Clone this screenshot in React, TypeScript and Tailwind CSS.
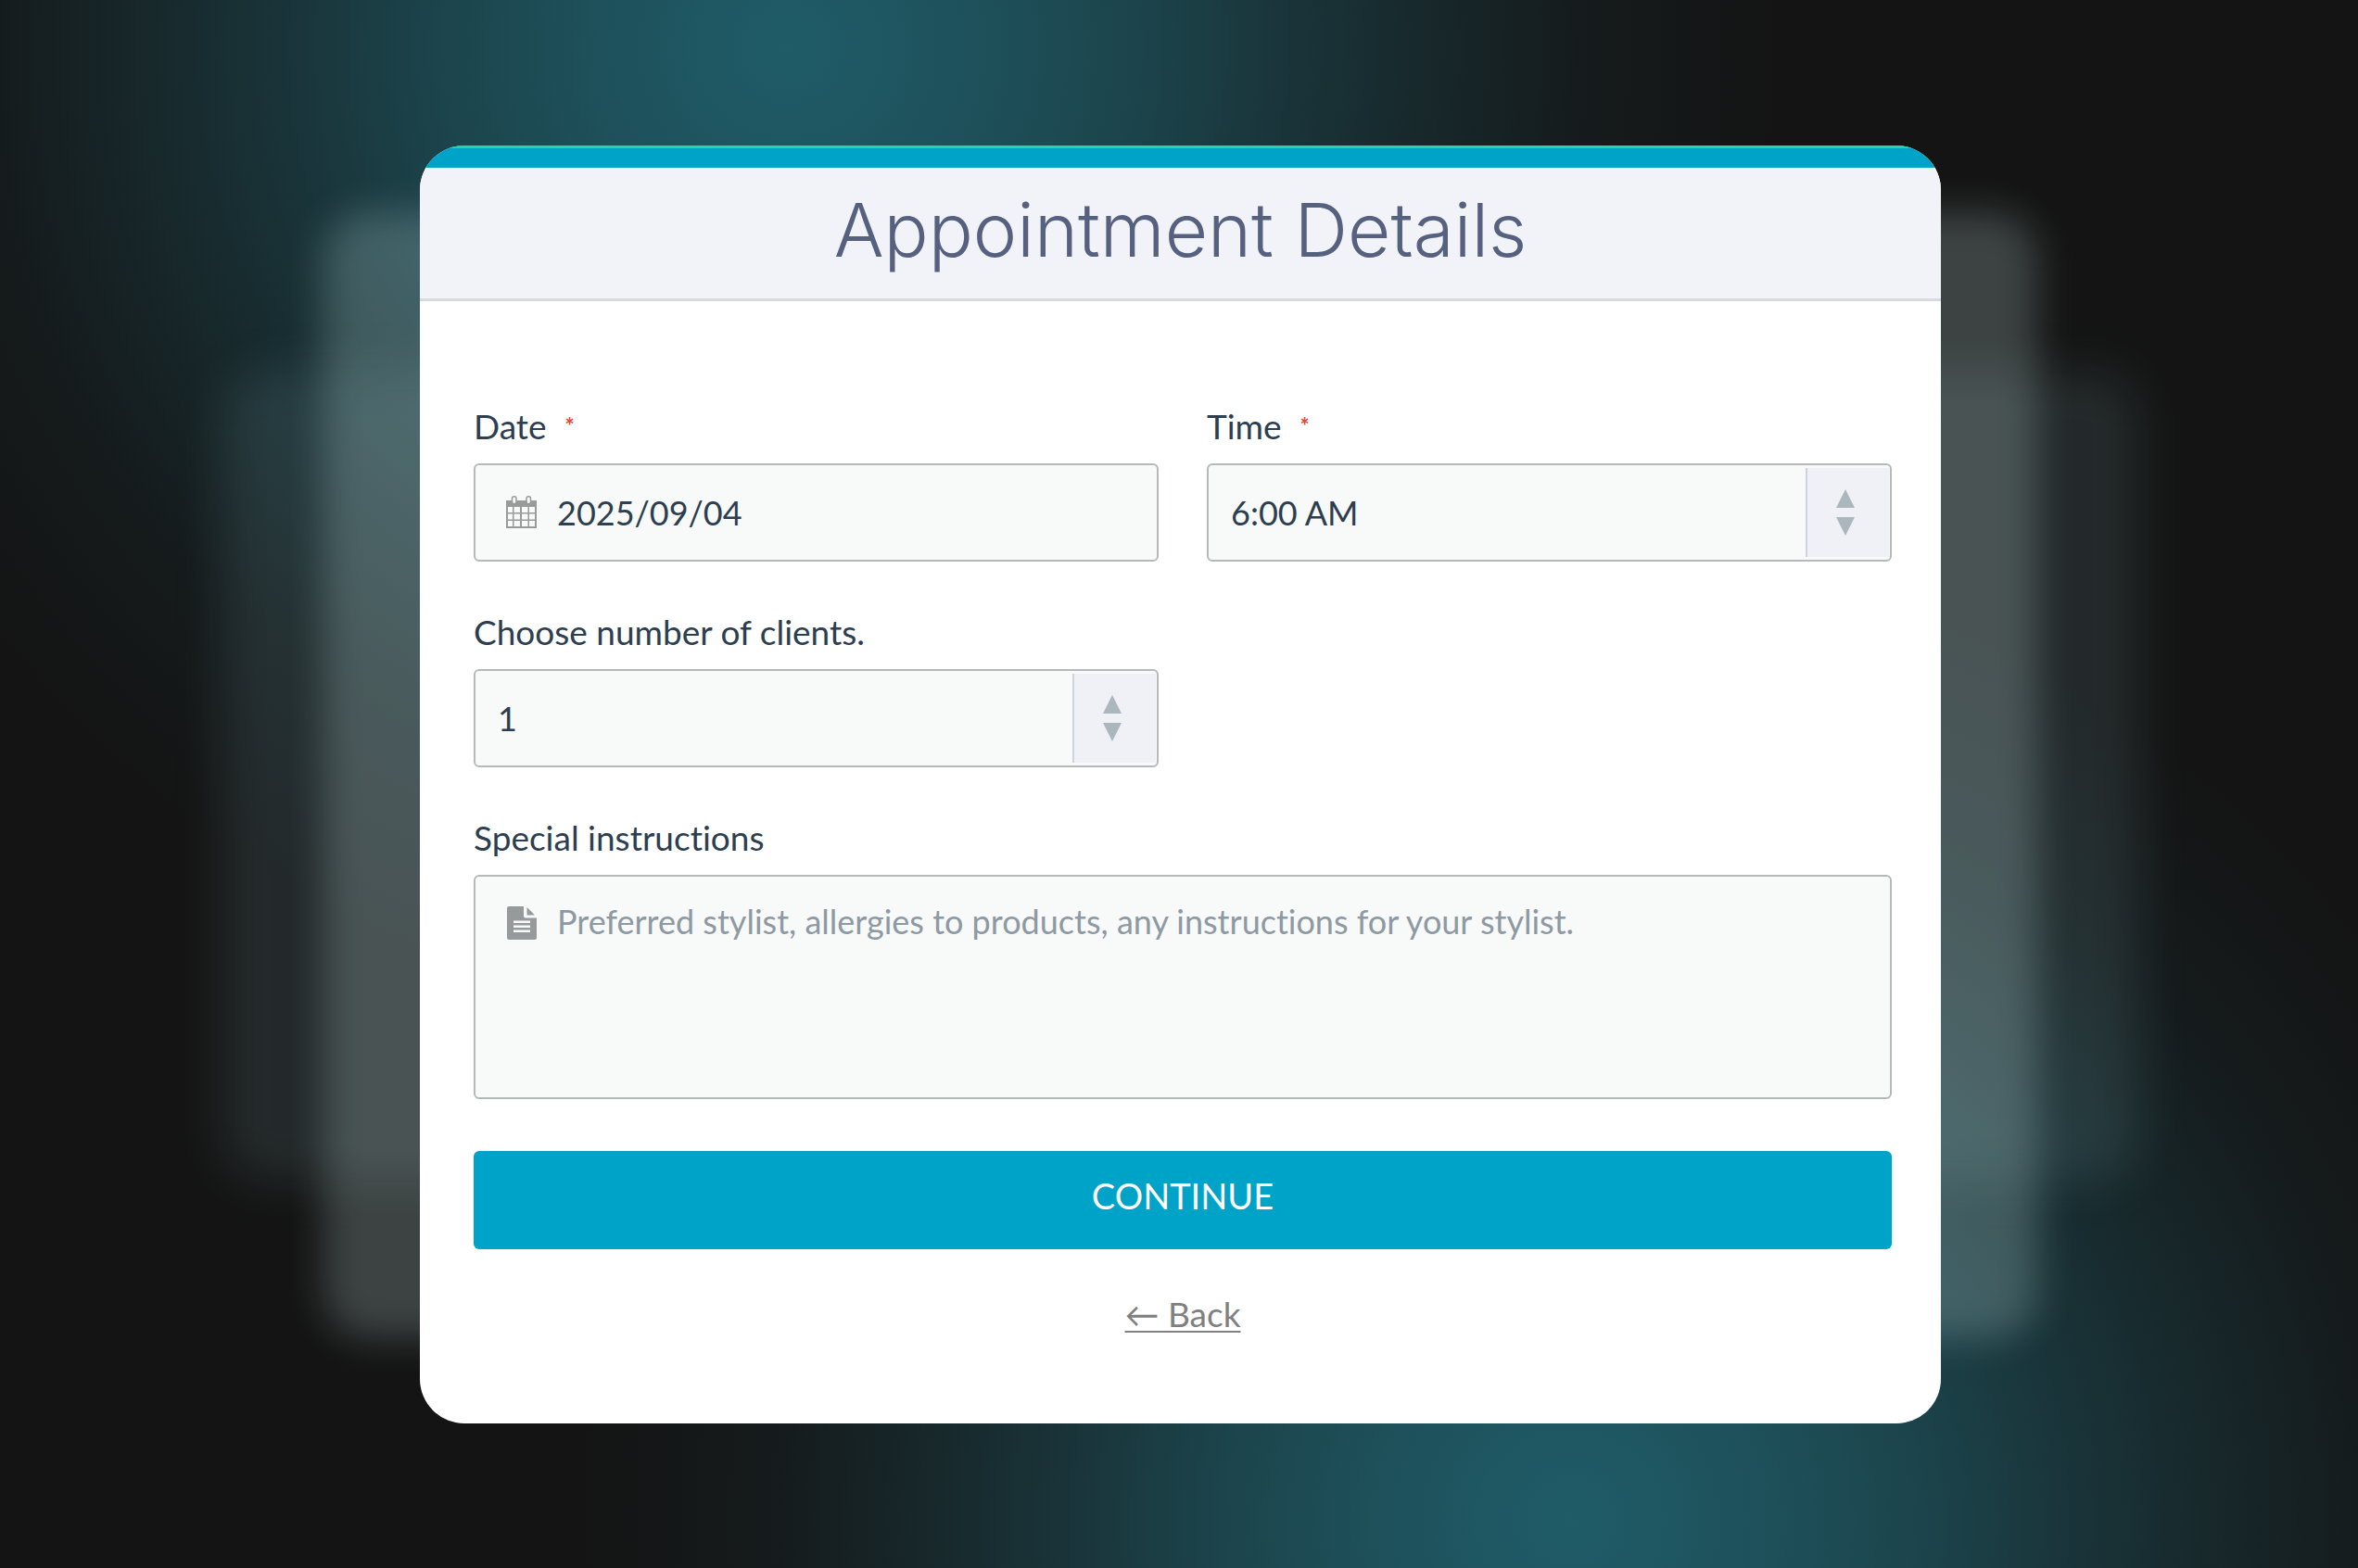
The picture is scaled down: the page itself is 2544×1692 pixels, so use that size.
import type { ReactNode } from "react";

function CalendarIcon() {
  return (
    <svg viewBox="0 0 33 35" className="h-[35px] w-[33px]" aria-hidden="true">
      <path
        fill="#989b9a"
        fillRule="evenodd"
        d="M0 5h33v30H0z M2 12v6h5v-6z M8.500 12v6h6.500v-6z M17 12v6h6.500v-6z M25 12v6h6v-6z M2 19.500v6h5v-6z M8.500 19.500v6h6.500v-6z M17 19.500v6h6.500v-6z M25 19.500v6h6v-6z M2 27v6h5v-6z M8.500 27v6h6.500v-6z M17 27v6h6.500v-6z M25 27v6h6v-6z"
      />
      <rect x="6.500" y="0.800" width="4.500" height="8" rx="2.200" fill="#f8f9f9" stroke="#989b9a" strokeWidth="1.500" />
      <rect x="22" y="0.800" width="4.500" height="8" rx="2.200" fill="#f8f9f9" stroke="#989b9a" strokeWidth="1.500" />
    </svg>
  );
}

function DocumentIcon() {
  return (
    <svg viewBox="0 0 32 36" className="h-[36px] w-[32px]" aria-hidden="true">
      <path
        fill="#979a9a"
        fillRule="evenodd"
        d="M2 0h16v10.500q0 2 2 2h12V34q0 2-2 2H2q-2 0-2-2V2Q0 0 2 0z M7 15.500v2.500h18v-2.500z M7 20.500v2.500h18v-2.500z M7 25.500v2.500h18v-2.500z"
      />
      <path fill="#979a9a" d="M21.500 1l8.500 8.500h-8.500z" />
    </svg>
  );
}

function Label({ htmlFor, required, children }: { htmlFor: string; required?: boolean; children: ReactNode }) {
  return (
    <label htmlFor={htmlFor} className="flex items-center gap-5 text-[37px] leading-[44px] text-[#2c3e50]">
      {children}
      {required && <span className="text-[24px] leading-[36px] font-bold text-[#f04030]">*</span>}
    </label>
  );
}

function SelectBox({ id, options }: { id: string; options: string[] }) {
  return (
    <div className="relative">
      <select
        id={id}
        className="block h-[106px] w-full appearance-none rounded-md border-2 border-[#b5b9b9] bg-[#f8f9f9] pr-[100px] pl-[24px] text-[36px] text-[#2c3e50]"
      >
        {options.map((option) => (
          <option key={option}>{option}</option>
        ))}
      </select>
      <div className="pointer-events-none absolute inset-y-[5px] right-[3px] flex w-[90px] items-center justify-center border-l-2 border-[#ccd3e2] bg-[#eff1f7] pr-1.5">
        <svg viewBox="0 0 20 50" className="h-[50px] w-[20px]" fill="#aab7bd" aria-hidden="true">
          <path d="M10 0l10 20H0z" />
          <path d="M10 50l10-20H0z" />
        </svg>
      </div>
    </div>
  );
}

export default function App() {
  return (
    <main className="flex min-h-screen items-center justify-center overflow-hidden bg-[#141414] bg-[radial-gradient(ellipse_42%_62%_at_33.4%_3%,#1f5c68_0%,#1f5762e6_20%,#1f5762b8_35%,#1f57627d_50%,#1f57624a_65%,#1f57621c_80%,transparent_100%),radial-gradient(ellipse_42%_62%_at_66.6%_97%,#1f5c68_0%,#1f5762e6_20%,#1f5762b8_35%,#1f57627d_50%,#1f57624a_65%,#1f57621c_80%,transparent_100%)] py-12 pr-8 pl-[35px] font-['Lato','Open_Sans',sans-serif] [font-variant-ligatures:none]">
      <div className="relative w-full max-w-[1641px]">
        <div className="absolute inset-x-[-214px] top-[243px] bottom-[261px] rounded-[48px] bg-[#b4ebfa]/10 blur-[26px]" />
        <div className="absolute inset-x-[-104px] top-[72px] bottom-[92px] rounded-[48px] bg-[#e1ffff]/20 blur-[20px]" />

        <section className="relative overflow-hidden rounded-[48px] bg-white">
          <div className="h-6 border-t-[3px] border-[#2ad0b0] bg-[#00a3c8]" />
          <header className="border-b-[3px] border-[#d6d9de] bg-[#f1f3f9] pt-[18px] pb-[25px] text-center">
            <h1 className="font-['Inter',sans-serif] text-[80px] leading-[98px] font-light text-[#56617f]">
              Appointment Details
            </h1>
          </header>

          <form className="pt-[113px] pr-[53px] pb-[96px] pl-[58px]" onSubmit={(e) => e.preventDefault()}>
            <div className="grid grid-cols-2 gap-x-[52px] gap-y-[54px]">
              <div className="flex flex-col gap-[18px]">
                <Label htmlFor="date" required>
                  Date
                </Label>
                <div className="flex h-[106px] items-center gap-[22px] rounded-md border-2 border-[#b5b9b9] bg-[#f8f9f9] pl-[33px]">
                  <CalendarIcon />
                  <input
                    id="date"
                    type="text"
                    defaultValue="2025/09/04"
                    className="h-full min-w-0 flex-1 bg-transparent text-[36px] text-[#2c3e50] outline-none"
                  />
                </div>
              </div>

              <div className="flex flex-col gap-[18px]">
                <Label htmlFor="time" required>
                  Time
                </Label>
                <SelectBox id="time" options={["6:00 AM", "7:00 AM", "8:00 AM", "9:00 AM"]} />
              </div>

              <div className="flex flex-col gap-[18px]">
                <Label htmlFor="clients">Choose number of clients.</Label>
                <SelectBox id="clients" options={["1", "2", "3", "4"]} />
              </div>

              <div className="col-span-2 flex flex-col gap-[18px]">
                <Label htmlFor="notes">Special instructions</Label>
                <div className="flex h-[242px] gap-[22px] rounded-md border-2 border-[#b5b9b9] bg-[#f8f9f9] pt-[26px] pl-[34px]">
                  <div className="pt-1.5">
                    <DocumentIcon />
                  </div>
                  <textarea
                    id="notes"
                    placeholder="Preferred stylist, allergies to products, any instructions for your stylist."
                    className="min-w-0 flex-1 resize-none bg-transparent text-[36px] leading-[44px] text-[#2c3e50] outline-none placeholder:text-[#8d99a3]"
                  />
                </div>
              </div>
            </div>

            <button
              type="submit"
              className="mt-[56px] block h-[106px] w-full rounded-md bg-[#00a3c8] pb-2 text-[38px] text-white"
            >
              CONTINUE
            </button>

            <div className="mt-[48px] text-center text-[37px] leading-[44px]">
              <a href="#back" className="text-[#808080] underline decoration-2 underline-offset-4">
                ← Back
              </a>
            </div>
          </form>
        </section>
      </div>
    </main>
  );
}
